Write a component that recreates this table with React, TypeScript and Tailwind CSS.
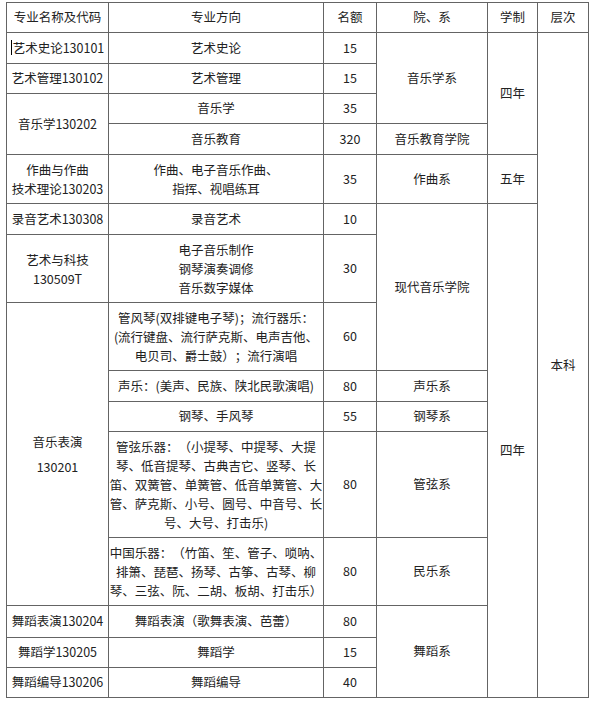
import React from "react";

const cell = "border border-[#646464] p-0 text-center align-middle";

function Lines({ lines }: { lines: string[] }) {
  return (
    <div className="leading-[19px]">
      {lines.map((l, i) => (
        <div key={i} className="whitespace-nowrap">
          {l}
        </div>
      ))}
    </div>
  );
}

export default function App() {
  return (
    <div className="min-h-[703px] bg-white pl-[6px] pt-[2px] text-[12.5px] text-[#222] [font-family:'Noto_Sans_CJK_SC','Noto_Sans',sans-serif] [text-spacing-trim:space-all]">
      <table className="w-[582px] table-fixed border-collapse">
        <colgroup>
          <col className="w-[102px]" />
          <col className="w-[215px]" />
          <col className="w-[53px]" />
          <col className="w-[111px]" />
          <col className="w-[50px]" />
          <col className="w-[51px]" />
        </colgroup>
        <tbody>
          {/* Header */}
          <tr className="h-[30px]">
            <td className={cell}>专业名称及代码</td>
            <td className={cell}>专业方向</td>
            <td className={cell}>名额</td>
            <td className={cell}>院、系</td>
            <td className={cell}>学制</td>
            <td className={cell}>层次</td>
          </tr>
          <tr className="h-[31px]">
            <td className={cell}>
              <span className="mr-px inline-block h-[15px] w-px translate-y-[2px] bg-black" />
              艺术史论130101
            </td>
            <td className={cell}>艺术史论</td>
            <td className={cell}>15</td>
            <td className={cell} rowSpan={3}>
              音乐学系
            </td>
            <td className={cell} rowSpan={4}>
              四年
            </td>
            <td className={cell} rowSpan={15}>
              本科
            </td>
          </tr>
          <tr className="h-[30px]">
            <td className={cell}>艺术管理130102</td>
            <td className={cell}>艺术管理</td>
            <td className={cell}>15</td>
          </tr>
          <tr className="h-[30px]">
            <td className={cell} rowSpan={2}>
              音乐学130202
            </td>
            <td className={cell}>音乐学</td>
            <td className={cell}>35</td>
          </tr>
          <tr className="h-[31px]">
            <td className={cell}>音乐教育</td>
            <td className={cell}>320</td>
            <td className={cell}>音乐教育学院</td>
          </tr>
          <tr className="h-[49px]">
            <td className={cell}>
              <Lines lines={["作曲与作曲", "技术理论130203"]} />
            </td>
            <td className={cell}>
              <Lines lines={["作曲、电子音乐作曲、", "指挥、视唱练耳"]} />
            </td>
            <td className={cell}>35</td>
            <td className={cell}>作曲系</td>
            <td className={cell}>五年</td>
          </tr>
          <tr className="h-[31px]">
            <td className={cell}>录音艺术130308</td>
            <td className={cell}>录音艺术</td>
            <td className={cell}>10</td>
            <td className={cell} rowSpan={3}>
              现代音乐学院
            </td>
            <td className={cell} rowSpan={10}>
              四年
            </td>
          </tr>
          <tr className="h-[68px]">
            <td className={cell}>
              <Lines lines={["艺术与科技", "130509T"]} />
            </td>
            <td className={cell}>
              <Lines lines={["电子音乐制作", "钢琴演奏调修", "音乐数字媒体"]} />
            </td>
            <td className={cell}>30</td>
          </tr>
          <tr className="h-[68px]">
            <td className={cell} rowSpan={5}>
              <div className="leading-[25px]">
                <div>音乐表演</div>
                <div>130201</div>
              </div>
            </td>
            <td className={cell}>
              <Lines
                lines={[
                  "管风琴(双排键电子琴)；流行器乐：",
                  "(流行键盘、流行萨克斯、电声吉他、",
                  "电贝司、爵士鼓）；流行演唱",
                ]}
              />
            </td>
            <td className={cell}>60</td>
          </tr>
          <tr className="h-[31px]">
            <td className={cell}>声乐：(美声、民族、陕北民歌演唱)</td>
            <td className={cell}>80</td>
            <td className={cell}>声乐系</td>
          </tr>
          <tr className="h-[30px]">
            <td className={cell}>钢琴、手风琴</td>
            <td className={cell}>55</td>
            <td className={cell}>钢琴系</td>
          </tr>
          <tr className="h-[106px]">
            <td className={cell}>
              <Lines
                lines={[
                  "管弦乐器：（小提琴、中提琴、大提",
                  "琴、低音提琴、古典吉它、竖琴、长",
                  "笛、双簧管、单簧管、低音单簧管、大",
                  "管、萨克斯、小号、圆号、中音号、长",
                  "号、大号、打击乐)",
                ]}
              />
            </td>
            <td className={cell}>80</td>
            <td className={cell}>管弦系</td>
          </tr>
          <tr className="h-[68px]">
            <td className={cell}>
              <Lines
                lines={[
                  "中国乐器：（竹笛、笙、管子、唢呐、",
                  "排箫、琵琶、扬琴、古筝、古琴、柳",
                  "琴、三弦、阮、二胡、板胡、打击乐）",
                ]}
              />
            </td>
            <td className={cell}>80</td>
            <td className={cell}>民乐系</td>
          </tr>
          <tr className="h-[32px]">
            <td className={cell}>舞蹈表演130204</td>
            <td className={cell}>舞蹈表演（歌舞表演、芭蕾）</td>
            <td className={cell}>80</td>
            <td className={cell} rowSpan={3}>
              舞蹈系
            </td>
          </tr>
          <tr className="h-[30px]">
            <td className={cell}>舞蹈学130205</td>
            <td className={cell}>舞蹈学</td>
            <td className={cell}>15</td>
          </tr>
          <tr className="h-[30px]">
            <td className={cell}>舞蹈编导130206</td>
            <td className={cell}>舞蹈编导</td>
            <td className={cell}>40</td>
          </tr>
        </tbody>
      </table>
    </div>
  );
}
